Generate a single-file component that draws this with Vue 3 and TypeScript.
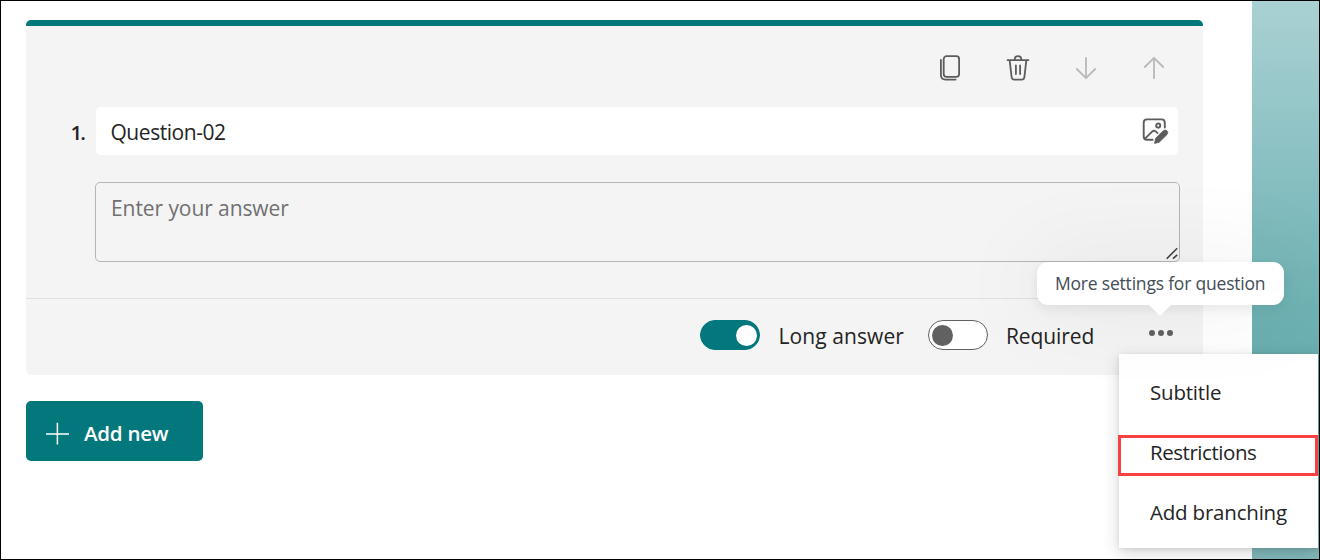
<script setup lang="ts">
import { ref } from 'vue'

interface MenuItem {
  label: string
  cls: string
}

const title = ref('Question-02')
const menuItems: MenuItem[] = [
  { label: 'Subtitle', cls: 'subtitle' },
  { label: 'Restrictions', cls: 'restrictions' },
  { label: 'Add branching', cls: 'branching' },
]
</script>

<template>
  <div class="window">
    <main class="page">
      <section class="card">
        <div class="accent"></div>
        <div class="body">
          <div class="tools">
            <svg width="28" height="28" viewBox="0 0 28 28" fill="none" stroke="#5c5c5c">
              <rect x="7.7" y="2.2" width="15.4" height="20.6" rx="2.8" stroke-width="1.8" />
              <path d="M4.9 5.8V20.8Q4.9 25.6 9.4 25.6H19.6" stroke-width="1.8" stroke-linecap="round" />
            </svg>
            <svg width="28" height="28" viewBox="0 0 28 28" fill="none" stroke="#5c5c5c" stroke-width="1.8" stroke-linecap="round">
              <path d="M3.6 6.2H24.4M10.7 5.7Q10.7 2.2 14 2.2T17.3 5.7M5.7 6.6L7.6 23Q7.9 25.7 10.4 25.7H17.6Q20.1 25.7 20.4 23L22.3 6.6M11.9 11.5V20M16.1 11.5V20" />
            </svg>
            <svg width="28" height="28" viewBox="0 0 28 28" fill="none" stroke="#b9b9b9" stroke-width="1.8" stroke-linecap="round" stroke-linejoin="round">
              <path d="M14 3.8V24.2M4.8 15L14 24.2L23.2 15" />
            </svg>
            <svg width="28" height="28" viewBox="0 0 28 28" fill="none" stroke="#b9b9b9" stroke-width="1.8" stroke-linecap="round" stroke-linejoin="round">
              <path d="M14 24.2V3.8M4.8 13L14 3.8L23.2 13" />
            </svg>
          </div>
          <div class="question">
            <span class="number">1.</span>
            <div class="title-field">
              <span class="t title">{{ title }}</span>
              <svg class="media" width="28" height="28" viewBox="0 0 28 28" fill="none" stroke="#5c5c5c" stroke-width="1.9">
                <path d="M11.6 23.8H6Q2.7 23.8 2.7 20.5V6.7Q2.7 3.4 6 3.4H20.5Q23.8 3.4 23.8 6.7V11.6" stroke-linecap="round" />
                <circle cx="17.2" cy="9.6" r="2.1" />
                <path d="M4 22.6L11.4 15.4Q13.1 14 14.7 15.4L17 17.6" />
                <path d="M13.6 27.4L14.5 22.4L22.3 14.7Q24.3 13.2 26 14.8Q27.6 16.6 26 18.6L18.2 26.2Z" fill="#5c5c5c" stroke="#5c5c5c" stroke-width=".8" stroke-linejoin="round" />
              </svg>
            </div>
          </div>
          <div class="answer">
            <span class="t placeholder">Enter your answer</span>
            <svg class="grip" width="14" height="14" viewBox="0 0 14 14" stroke="#444" stroke-width="1.6">
              <path d="M1.7 11.7L12.2 1.2M8 11.7L12.2 7.8" />
            </svg>
          </div>
        </div>
        <footer class="options">
          <span class="switch on"><i></i></span>
          <span class="t long">Long answer</span>
          <span class="switch off"><i></i></span>
          <span class="t required">Required</span>
          <span class="dots"><i></i><i></i><i></i></span>
        </footer>
      </section>
      <button class="add" type="button">
        <svg width="24" height="24" viewBox="0 0 24 24" stroke="#fff" stroke-width="1.5">
          <path d="M0 12.9H23M11.4 1.7V23.5" />
        </svg>
        <span class="t">Add new</span>
      </button>
    </main>
    <aside class="backdrop"></aside>

    <div class="menu">
      <div v-for="item in menuItems" :key="item.cls" class="item" :class="item.cls">
        <span class="t">{{ item.label }}</span>
      </div>
    </div>
    <div class="tooltip"><span class="t">More settings for question</span></div>
  </div>
</template>

<style>
body {
  margin: 0;
  overflow: hidden;
}
</style>

<style scoped>
.window {
  position: relative;
  box-sizing: border-box;
  width: 1320px;
  height: 560px;
  border: 1px solid #000;
  overflow: hidden;
  display: flex;
  background: #fff;
  color: #242424;
  font-family: "Open Sans", "Noto Sans", sans-serif;
  font-size: 21px;
  line-height: 28px;
}
.t {
  white-space: nowrap;
}
.page {
  box-sizing: border-box;
  width: 1251px;
  padding: 19px 49px 0 25px;
}
.backdrop {
  flex: 1;
  background: linear-gradient(#a9d1d3 0%, #88bfc1 31%, #70b3b4 54%, #68acae 68%, #82b8ba 100%);
}
.card {
  height: 355px;
  display: flex;
  flex-direction: column;
}
.accent {
  height: 6px;
  background: #03787c;
  border-radius: 5px 5px 0 0;
}
.body {
  box-sizing: border-box;
  height: 272px;
  padding: 28px 23px 0 45px;
  background: #f4f4f4;
  border-radius: 5px 5px 0 0;
}
.tools {
  display: flex;
  justify-content: flex-end;
  gap: 40px;
  padding-right: 12px;
  height: 28px;
}
.question {
  display: flex;
  align-items: center;
  margin-top: 25px;
}
.number {
  width: 25px;
  padding-top: 2px;
  box-sizing: border-box;
  font-weight: 600;
  font-size: 20.5px;
  letter-spacing: -2px;
  text-indent: -0.5px;
}
.title-field {
  box-sizing: border-box;
  width: 1082px;
  height: 48px;
  display: flex;
  align-items: center;
  justify-content: space-between;
  padding: 2px 9px 0 14.5px;
  background: #fff;
  border-radius: 5px;
}
.title {
  letter-spacing: -0.46px;
}
.media {
  margin-top: -4px;
}
.answer {
  position: relative;
  box-sizing: border-box;
  width: 1085px;
  height: 80px;
  margin: 27px 0 0 24px;
  padding: 11px 15px;
  border: 1px solid #b5b5b5;
  border-radius: 5px;
}
.placeholder {
  color: #707070;
  letter-spacing: -0.08px;
}
.grip {
  position: absolute;
  right: 0;
  bottom: 0;
}
.options {
  box-sizing: border-box;
  height: 77px;
  display: flex;
  align-items: center;
  padding: 0 30px 4px 674px;
  border-top: 1px solid #e0e0e0;
  background: #f4f4f4;
  border-radius: 0 0 5px 5px;
}
.switch {
  box-sizing: border-box;
  width: 60px;
  height: 30px;
  display: flex;
  align-items: center;
  border-radius: 15px;
  border: 1px solid #616161;
  padding: 0 3px;
  background: #fff;
}
.switch i {
  width: 21px;
  height: 21px;
  border-radius: 50%;
  background: #616161;
}
.switch.on {
  justify-content: flex-end;
  padding-right: 2px;
  background: #03787c;
  border-color: #03787c;
}
.switch.on i {
  background: #fff;
}
.long {
  width: 149px;
  padding-left: 18.5px;
  box-sizing: border-box;
  margin-right: 19px;
  letter-spacing: 0.08px;
}
.long,
.required {
  padding-top: 2px;
}
.required {
  margin-left: 18px;
  letter-spacing: -0.1px;
}
.dots {
  display: flex;
  gap: 3px;
  margin: -4px 0 0 auto;
}
.dots i {
  width: 6px;
  height: 6px;
  border-radius: 50%;
  background: #616161;
}
.add {
  display: flex;
  align-items: center;
  gap: 14px;
  width: 177px;
  height: 60px;
  margin-top: 26px;
  padding: 4px 0 0 20px;
  border: 0;
  border-radius: 5px;
  background: #03787c;
  color: #fff;
  font: 600 20.5px/28px "Open Sans", "Noto Sans", sans-serif;
  letter-spacing: -0.25px;
}
.menu {
  position: absolute;
  left: 1118px;
  top: 353px;
  width: 199px;
  height: 194px;
  display: flex;
  flex-direction: column;
  justify-content: space-between;
  background: #fff;
  font-size: 20.5px;
  box-shadow: 0 5px 16px rgba(0, 0, 0, 0.16), 0 1px 4px rgba(0, 0, 0, 0.1);
}
.item {
  box-sizing: border-box;
  height: 78px;
  padding: 24px 0 0 31px;
  letter-spacing: -0.2px;
}
.restrictions {
  flex: none;
  height: 41px;
  width: 200px;
  margin: 3px 0 0 -1px;
  padding: 0 0 0 29px;
  border: 3px solid #f94144;
  letter-spacing: -0.45px;
}
.branching {
  height: 72px;
  padding-top: 22px;
}
.tooltip {
  position: absolute;
  left: 1036px;
  top: 261px;
  width: 247px;
  height: 43px;
  box-sizing: border-box;
  padding: 7px 0 0 18px;
  border-radius: 11px;
  background: #fff;
  color: #444c57;
  font-size: 17.5px;
  letter-spacing: -0.2px;
  box-shadow: 0 4px 12px rgba(20, 30, 50, 0.08), 0 0 90px 12px rgba(20, 25, 40, 0.05);
}
.tooltip::after {
  content: "";
  position: absolute;
  left: 112px;
  top: 43px;
  border: 11px solid transparent;
  border-top-color: #fff;
  border-bottom: 0;
}
</style>
